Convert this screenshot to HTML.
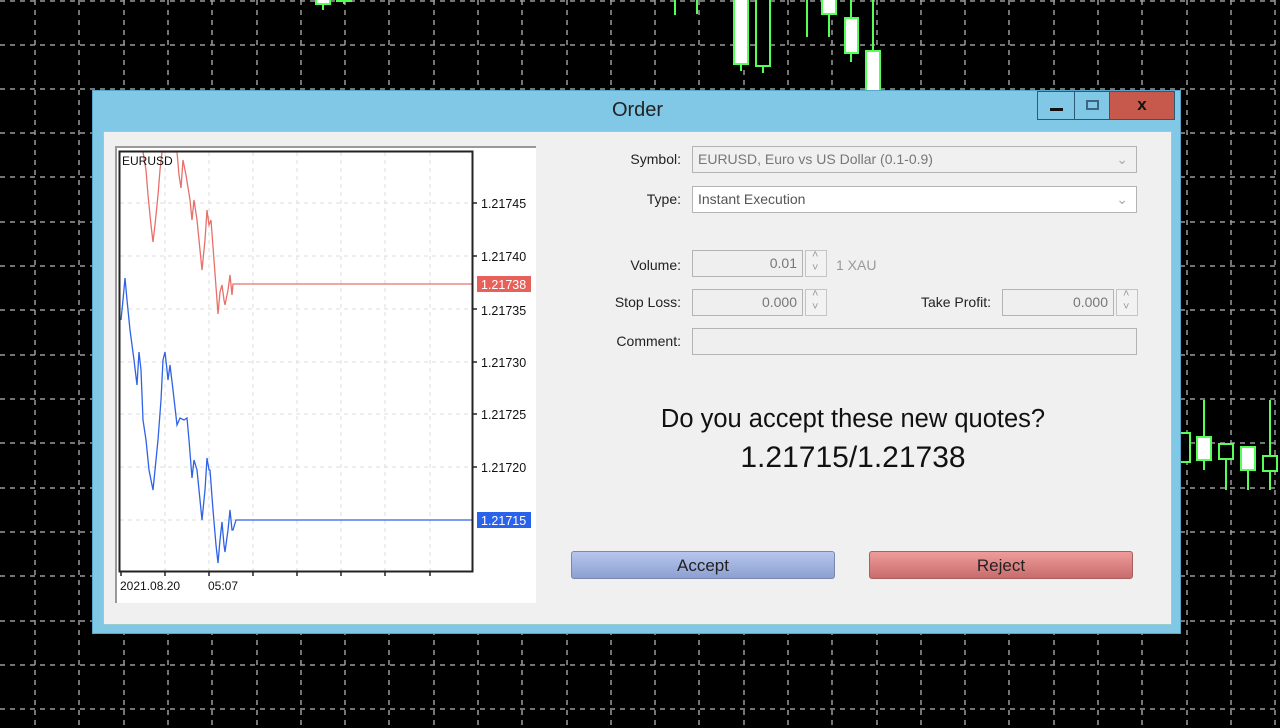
<!DOCTYPE html>
<html><head><meta charset="utf-8"><style>
*{margin:0;padding:0;box-sizing:border-box}
body{width:1280px;height:728px;background:#000;position:relative;overflow:hidden;font-family:"Liberation Sans",sans-serif}
.abs{position:absolute}
.win{left:92px;top:90px;width:1089px;height:544px;background:#80c8e6;border:1px solid #5aa6c8}
.title{left:0;top:8px;width:1089px;text-align:center;font-size:20px;color:#222}
.client{left:10px;top:40px;width:1069px;height:494px;background:#f0f0f0;border:1px solid #9cc}
.lbl{font-size:14px;color:#222;text-align:right;width:120px}
.fld{border:1px solid #b4b4b4;background:#efefef;font-size:14px;color:#777;padding:3px 5px;height:27px;line-height:19px}
.spin{border:1px solid #c4c4c4;background:#f2f2f2;width:22px;height:27px}
.spin:before{content:"˄";position:absolute;left:6px;top:-2px;font-size:11px;color:#999}
.spin:after{content:"˅";position:absolute;left:6px;top:11px;font-size:11px;color:#999}
.btn{height:28px;border-radius:3px;font-size:17px;text-align:center;line-height:27px;color:#222}
</style></head><body>
<svg class="abs" style="left:0;top:0" width="1280" height="728">
<g stroke="#9a9a9a" stroke-width="1.5" stroke-dasharray="5,5">
<line x1="35" y1="0" x2="35" y2="728"/><line x1="79" y1="0" x2="79" y2="728"/><line x1="124" y1="0" x2="124" y2="728"/><line x1="168" y1="0" x2="168" y2="728"/><line x1="212" y1="0" x2="212" y2="728"/><line x1="257" y1="0" x2="257" y2="728"/><line x1="301" y1="0" x2="301" y2="728"/><line x1="345" y1="0" x2="345" y2="728"/><line x1="389" y1="0" x2="389" y2="728"/><line x1="434" y1="0" x2="434" y2="728"/><line x1="478" y1="0" x2="478" y2="728"/><line x1="522" y1="0" x2="522" y2="728"/><line x1="567" y1="0" x2="567" y2="728"/><line x1="611" y1="0" x2="611" y2="728"/><line x1="655" y1="0" x2="655" y2="728"/><line x1="699" y1="0" x2="699" y2="728"/><line x1="744" y1="0" x2="744" y2="728"/><line x1="788" y1="0" x2="788" y2="728"/><line x1="832" y1="0" x2="832" y2="728"/><line x1="877" y1="0" x2="877" y2="728"/><line x1="921" y1="0" x2="921" y2="728"/><line x1="965" y1="0" x2="965" y2="728"/><line x1="1009" y1="0" x2="1009" y2="728"/><line x1="1054" y1="0" x2="1054" y2="728"/><line x1="1098" y1="0" x2="1098" y2="728"/><line x1="1142" y1="0" x2="1142" y2="728"/><line x1="1187" y1="0" x2="1187" y2="728"/><line x1="1231" y1="0" x2="1231" y2="728"/><line x1="1275" y1="0" x2="1275" y2="728"/>
<line x1="0" y1="1" x2="1280" y2="1"/><line x1="0" y1="45" x2="1280" y2="45"/><line x1="0" y1="89" x2="1280" y2="89"/><line x1="0" y1="133" x2="1280" y2="133"/><line x1="0" y1="177" x2="1280" y2="177"/><line x1="0" y1="222" x2="1280" y2="222"/><line x1="0" y1="266" x2="1280" y2="266"/><line x1="0" y1="310" x2="1280" y2="310"/><line x1="0" y1="355" x2="1280" y2="355"/><line x1="0" y1="399" x2="1280" y2="399"/><line x1="0" y1="443" x2="1280" y2="443"/><line x1="0" y1="488" x2="1280" y2="488"/><line x1="0" y1="532" x2="1280" y2="532"/><line x1="0" y1="576" x2="1280" y2="576"/><line x1="0" y1="621" x2="1280" y2="621"/><line x1="0" y1="665" x2="1280" y2="665"/><line x1="0" y1="709" x2="1280" y2="709"/>
</g>
<g stroke="#5f5" stroke-width="2">
<line x1="323" y1="0" x2="323" y2="10"/><rect x="316" y="-2" width="14" height="6" fill="#fff"/>
<line x1="344" y1="0" x2="344" y2="4"/><rect x="337" y="-2" width="14" height="3" fill="#000"/>
<line x1="675" y1="0" x2="675" y2="15"/><line x1="697" y1="0" x2="697" y2="14"/>
<line x1="741" y1="0" x2="741" y2="71"/><rect x="734" y="-2" width="14" height="66" fill="#fff"/>
<line x1="763" y1="0" x2="763" y2="73"/><rect x="756" y="-2" width="14" height="68" fill="#000"/>
<line x1="807" y1="0" x2="807" y2="37"/>
<line x1="829" y1="0" x2="829" y2="37"/><rect x="822" y="-2" width="14" height="16" fill="#fff"/>
<line x1="851" y1="0" x2="851" y2="62"/><rect x="845" y="18" width="13" height="35" fill="#fff"/>
<line x1="873" y1="0" x2="873" y2="90"/><rect x="866" y="51" width="14" height="40" fill="#fff"/>
<rect x="1178" y="433" width="12" height="29" fill="#000"/>
<line x1="1204" y1="400" x2="1204" y2="470"/><rect x="1197" y="437" width="14" height="23" fill="#fff"/>
<line x1="1226" y1="444" x2="1226" y2="490"/><rect x="1219" y="444" width="14" height="15" fill="#000"/>
<line x1="1248" y1="447" x2="1248" y2="490"/><rect x="1241" y="447" width="14" height="23" fill="#fff"/>
<line x1="1270" y1="400" x2="1270" y2="490"/><rect x="1263" y="456" width="14" height="15" fill="#000"/>
</g>
</svg>

<div class="abs win">
 <div class="abs title">Order</div>
 <div class="abs" style="left:944px;top:0;width:38px;height:29px;border:1px solid #2c5a72;background:#80c8e6"><div class="abs" style="left:12px;top:16px;width:13px;height:3px;background:#111"></div></div>
 <div class="abs" style="left:982px;top:0;width:35px;height:29px;border:1px solid #2c5a72;border-left:none;background:#80c8e6"><div class="abs" style="left:11px;top:8px;width:13px;height:10px;border:2px solid #3a6680"></div></div>
 <div class="abs" style="left:1017px;top:0;width:65px;height:29px;border:1px solid #2c5a72;border-left:none;background:#c7584c;text-align:center;font-size:17px;font-weight:bold;line-height:26px;color:#111">x</div>
 <div class="abs client"></div>
</div>

<div class="abs" style="left:115px;top:146px;width:421px;height:457px;background:#fff;border-top:2px solid #999;border-left:2px solid #999"></div>
<svg class="abs" style="left:0;top:0" width="1280" height="728">
<g stroke="#ddd" stroke-width="1" stroke-dasharray="4,4">
<line x1="165" y1="152" x2="165" y2="571"/><line x1="209" y1="152" x2="209" y2="571"/><line x1="253" y1="152" x2="253" y2="571"/><line x1="297" y1="152" x2="297" y2="571"/><line x1="341" y1="152" x2="341" y2="571"/><line x1="385" y1="152" x2="385" y2="571"/><line x1="430" y1="152" x2="430" y2="571"/>
<line x1="120" y1="203" x2="472" y2="203"/><line x1="120" y1="256" x2="472" y2="256"/><line x1="120" y1="309" x2="472" y2="309"/><line x1="120" y1="362" x2="472" y2="362"/><line x1="120" y1="414" x2="472" y2="414"/><line x1="120" y1="467" x2="472" y2="467"/><line x1="120" y1="520" x2="472" y2="520"/>
</g>
<polyline fill="none" stroke="#e8706a" stroke-width="1.3" points="143,152 146,170 148,195 151,225 153,242 155,225 158,195 160,170 162,152 168,152 175,152 177,152 179,175 181,188 183,160 186,175 190,200 192,220 194,200 197,220 200,250 202,270 205,240 207,210 209,225 211,220 214,260 218,314 220,292 222,285 224,300 225,305 228,290 230,275 232,295 233,284 235,284 472,284"/>
<polyline fill="none" stroke="#2f62e8" stroke-width="1.3" points="121,320 123,300 125,278 127,300 130,330 134,360 137,385 139,352 141,370 143,420 146,440 149,470 151,480 153,490 155,470 158,440 161,400 163,360 165,352 167,370 168,380 170,365 173,390 177,425 180,418 184,420 187,418 189,440 192,478 194,460 197,470 200,500 202,520 205,490 207,458 209,470 210,470 213,510 216,545 218,563 220,540 222,522 224,545 225,552 228,530 230,510 232,530 233,530 236,520 472,520"/>
<rect x="119.5" y="151.5" width="353" height="420" fill="none" stroke="#222" stroke-width="2"/>
<g stroke="#222" stroke-width="1.5">
<line x1="472" y1="203" x2="477" y2="203"/><line x1="472" y1="256" x2="477" y2="256"/><line x1="472" y1="309" x2="477" y2="309"/><line x1="472" y1="362" x2="477" y2="362"/><line x1="472" y1="414" x2="477" y2="414"/><line x1="472" y1="467" x2="477" y2="467"/>
<line x1="121" y1="571" x2="121" y2="576"/><line x1="165" y1="571" x2="165" y2="576"/><line x1="209" y1="571" x2="209" y2="576"/><line x1="253" y1="571" x2="253" y2="576"/><line x1="297" y1="571" x2="297" y2="576"/><line x1="341" y1="571" x2="341" y2="576"/><line x1="385" y1="571" x2="385" y2="576"/><line x1="430" y1="571" x2="430" y2="576"/>
</g>
<rect x="477" y="276" width="54" height="16" fill="#e8605a"/>
<rect x="477" y="512" width="54" height="16" fill="#2a62ea"/>
<g font-family="Liberation Sans, sans-serif" font-size="12.5" fill="#111">
<text x="122" y="165" font-size="12">EURUSD</text>
<text x="481" y="208">1.21745</text><text x="481" y="261">1.21740</text><text x="481" y="315">1.21735</text><text x="481" y="367">1.21730</text><text x="481" y="419">1.21725</text><text x="481" y="472">1.21720</text>
<text x="481" y="289" fill="#fff">1.21738</text><text x="481" y="525" fill="#fff">1.21715</text>
<text x="120" y="590" font-size="12">2021.08.20</text><text x="208" y="590" font-size="12">05:07</text>
</g>
</svg>

<div class="abs lbl" style="left:561px;top:151px">Symbol:</div>
<div class="abs fld" style="left:692px;top:146px;width:445px;background:#f0f0f0">EURUSD, Euro vs US Dollar (0.1-0.9)<span class="abs" style="right:8px;top:3px;color:#aaa">⌄</span></div>
<div class="abs lbl" style="left:561px;top:191px">Type:</div>
<div class="abs fld" style="left:692px;top:186px;width:445px;background:#fff;color:#555">Instant Execution<span class="abs" style="right:8px;top:3px;color:#aaa">⌄</span></div>
<div class="abs lbl" style="left:561px;top:257px">Volume:</div>
<div class="abs fld" style="left:692px;top:250px;width:111px;text-align:right">0.01</div>
<div class="abs spin" style="left:805px;top:250px"></div>
<div class="abs" style="left:836px;top:257px;font-size:14px;color:#999">1 XAU</div>
<div class="abs lbl" style="left:561px;top:294px">Stop Loss:</div>
<div class="abs fld" style="left:692px;top:289px;width:111px;text-align:right">0.000</div>
<div class="abs spin" style="left:805px;top:289px"></div>
<div class="abs lbl" style="left:871px;top:294px">Take Profit:</div>
<div class="abs fld" style="left:1002px;top:289px;width:112px;text-align:right">0.000</div>
<div class="abs spin" style="left:1116px;top:289px"></div>
<div class="abs lbl" style="left:561px;top:333px">Comment:</div>
<div class="abs fld" style="left:692px;top:328px;width:445px"></div>

<div class="abs" style="left:603px;top:405px;width:500px;text-align:center;font-size:25.5px;color:#111">Do you accept these new quotes?</div>
<div class="abs" style="left:603px;top:441px;width:500px;text-align:center;font-size:30px;color:#111">1.21715/1.21738</div>

<div class="abs btn" style="left:571px;top:551px;width:264px;background:linear-gradient(#b6c6ee,#8ea0d0);border:1px solid #7a88b0">Accept</div>
<div class="abs btn" style="left:869px;top:551px;width:264px;background:linear-gradient(#ee9c9a,#c86c6c);border:1px solid #a86060">Reject</div>
</body></html>
